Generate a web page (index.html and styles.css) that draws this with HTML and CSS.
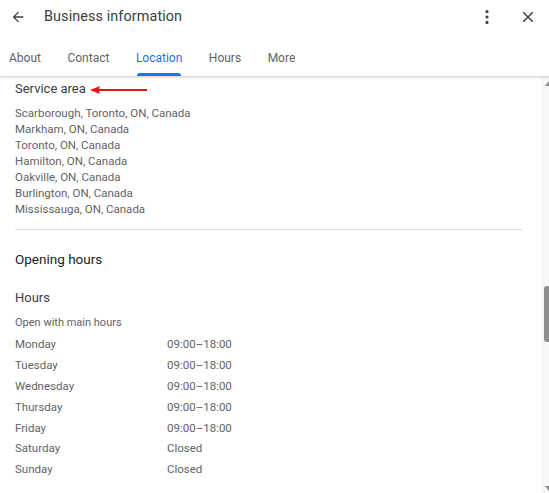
FILE: index.html
```html
<!DOCTYPE html>
<html>
<head>
<meta charset="utf-8">
<link rel="stylesheet" href="styles.css">
</head>
<body>
<div class="app">
  <header class="header">
    <div class="titlebar">
      <svg class="back" width="16" height="16" viewBox="0 0 24 24"><path d="M20 11H7.83l5.59-5.59L12 4l-8 8 8 8 1.41-1.41L7.83 13H20v-2z" fill="#3c4043"/></svg>
      <h1 class="title">Business information</h1>
      <svg class="more" width="20" height="20" viewBox="0 0 24 24"><circle cx="12" cy="5.5" r="1.9" fill="#3c4043"/><circle cx="12" cy="12" r="1.9" fill="#3c4043"/><circle cx="12" cy="18.5" r="1.9" fill="#3c4043"/></svg>
      <svg class="close" width="18" height="18" viewBox="0 0 24 24"><path d="M19 6.41L17.59 5 12 10.59 6.41 5 5 6.41 10.59 12 5 17.59 6.41 19 12 13.41 17.59 19 19 17.59 13.41 12z" fill="#3c4043"/></svg>
    </div>
    <nav class="tabs">
      <span class="tab">About</span>
      <span class="tab">Contact</span>
      <span class="tab active">Location</span>
      <span class="tab">Hours</span>
      <span class="tab">More</span>
    </nav>
  </header>
  <div class="body">
    <main class="content">
      <section class="service">
        <div class="service-head">
          <h2 class="h-sub">Service area</h2>
          <svg class="red-arrow" width="60" height="10" viewBox="0 0 60 10"><path d="M0 5 L10 1 L9 4 L57 4 L57 6 L9 6 L10 9 Z" fill="#e8140f"/></svg>
        </div>
        <ul class="areas">
          <li>Scarborough, Toronto, ON, Canada</li>
          <li>Markham, ON, Canada</li>
          <li>Toronto, ON, Canada</li>
          <li>Hamilton, ON, Canada</li>
          <li>Oakville, ON, Canada</li>
          <li>Burlington, ON, Canada</li>
          <li>Mississauga, ON, Canada</li>
        </ul>
      </section>
      <hr class="divider">
      <section class="opening">
        <h2 class="h-main">Opening hours</h2>
        <h3 class="h-sub hours-title">Hours</h3>
        <p class="note">Open with main hours</p>
        <div class="grid">
          <span>Monday</span><span>09:00–18:00</span>
          <span>Tuesday</span><span>09:00–18:00</span>
          <span>Wednesday</span><span>09:00–18:00</span>
          <span>Thursday</span><span>09:00–18:00</span>
          <span>Friday</span><span>09:00–18:00</span>
          <span>Saturday</span><span>Closed</span>
          <span>Sunday</span><span>Closed</span>
        </div>
      </section>
    </main>
    <div class="scrollbar">
      <div class="sb-up"></div>
      <div class="sb-track"><div class="sb-thumb"></div></div>
      <div class="sb-down"></div>
    </div>
  </div>
</div>
</body>
</html>
```

FILE: styles.css
```css
* { box-sizing: border-box; }
html, body { margin: 0; padding: 0; background: #fff; }
body { font-family: Roboto, "Noto Sans", Arial, sans-serif; color: #3c4043; width: 549px; height: 493px; overflow: hidden; }
.app { display: flex; flex-direction: column; height: 493px; }
.header { border-bottom: 1px solid #dadce0; box-shadow: 0 1px 2px rgba(60,64,67,0.15); position: relative; z-index: 1; }
.titlebar { display: flex; align-items: center; height: 33px; padding: 0 0 0 10px; }
.title { font-size: 14.4px; font-weight: 400; margin: 0 0 0 18px; color: #3c4043; flex: 1; letter-spacing: 0.1px; }
.more { margin-right: 22px; }
.close { margin-right: 12px; }
.tabs { display: flex; height: 43px; padding-left: 9px; }
.tab { font-size: 12px; color: #5f6368; padding-top: 18px; margin-right: 26.5px; position: relative; }
.tab.active { color: #1a73e8; }
.tab.active::after { content: ""; position: absolute; left: 1px; right: 1px; bottom: 0; height: 3px; background: #1a73e8; border-radius: 3px 3px 0 0; }
.body { flex: 1; display: flex; min-height: 0; }
.content { flex: 1; padding: 3px 19px 0 15px; }
.service-head { display: flex; align-items: center; }
.h-sub { font-size: 13px; font-weight: 400; margin: 0; color: #3c4043; line-height: 18px; }
.red-arrow { margin-left: 4px; margin-top: 1px; }
.areas { list-style: none; padding: 0; margin: 7px 0 0; font-size: 11.5px; line-height: 16px; color: #5f6368; }
.divider { border: 0; border-top: 1px solid #dadce0; margin: 12px 0 0; }
.h-main { font-size: 13.5px; font-weight: 400; margin: 20px 0 0; color: #202124; line-height: 18px; }
.hours-title { margin-top: 21px; }
.note { font-size: 11px; color: #5f6368; margin: 8px 0 0; line-height: 16px; }
.grid { display: grid; grid-template-columns: 152px auto; grid-auto-rows: 20.8px; margin-top: 3px; font-size: 11.5px; color: #5f6368; align-items: center; }
.scrollbar { width: 8px; background: #f7f7f7; display: flex; flex-direction: column; align-items: flex-end; }
.sb-up { width: 0; height: 0; border-left: 4px solid transparent; border-bottom: 5px solid #8a8a8a; margin-top: 4px; }
.sb-track { flex: 1; width: 100%; display: flex; flex-direction: column; align-items: flex-end; }
.sb-thumb { width: 5px; height: 56px; background: #8e8e8e; border-radius: 3px 0 0 3px; margin-top: 200px; }
.sb-down { width: 0; height: 0; border-left: 4px solid transparent; border-top: 5px solid #8a8a8a; margin-bottom: 2px; }
```
